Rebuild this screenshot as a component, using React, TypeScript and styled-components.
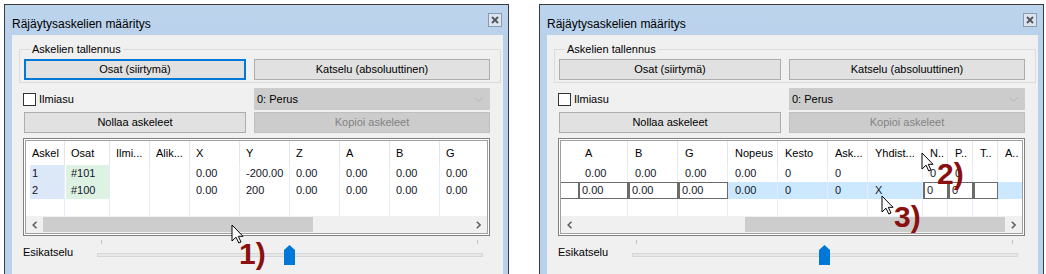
import React from "react";
import styled, { createGlobalStyle, css } from "styled-components";

type Tone = "blue" | "green";

interface Col {
  title: string;
  width: number;
  tone?: Tone;
  pad?: number;
}

interface Cell {
  text: string;
  boxed?: boolean;
}

interface Row {
  cells: Cell[];
  selected?: boolean;
  boxedLead?: boolean;
}

interface GridSpec {
  lead: number;
  pad: number;
  cols: Col[];
  rows: Row[];
  thumb: { offset: number; width: number };
}

interface Mark {
  label: string;
  x: number;
  y: number;
}

interface Pointer {
  x: number;
  y: number;
}

const txt = (...values: string[]): Cell[] => values.map((text) => ({ text }));

const leftGrid: GridSpec = {
  lead: 3,
  pad: 6,
  cols: [
    { title: "Askel", width: 36, tone: "blue", pad: 3 },
    { title: "Osat", width: 45, tone: "green" },
    { title: "Ilmi...", width: 40 },
    { title: "Alik...", width: 40 },
    { title: "X", width: 50 },
    { title: "Y", width: 50 },
    { title: "Z", width: 50 },
    { title: "A", width: 50 },
    { title: "B", width: 50 },
    { title: "G", width: 50 },
  ],
  rows: [
    { cells: txt("1", "#101", "", "", "0.00", "-200.00", "0.00", "0.00", "0.00", "0.00") },
    { cells: txt("2", "#100", "", "", "0.00", "200", "0.00", "0.00", "0.00", "0.00") },
  ],
  thumb: { offset: 0, width: 270 },
};

const rightGrid: GridSpec = {
  lead: 17,
  pad: 7,
  cols: [
    { title: "A", width: 50 },
    { title: "B", width: 50 },
    { title: "G", width: 50 },
    { title: "Nopeus", width: 50 },
    { title: "Kesto", width: 50 },
    { title: "Ask...", width: 40 },
    { title: "Yhdist...", width: 55 },
    { title: "N..", width: 25 },
    { title: "P..", width: 25 },
    { title: "T..", width: 25 },
    { title: "A..", width: 25 },
  ],
  rows: [
    { cells: txt("0.00", "0.00", "0.00", "0.00", "0", "0", "", "0", "0", "", "") },
    {
      selected: true,
      boxedLead: true,
      cells: [
        { text: "0.00", boxed: true },
        { text: "0.00", boxed: true },
        { text: "0.00", boxed: true },
        { text: "0.00" },
        { text: "0" },
        { text: "0" },
        { text: "X" },
        { text: "0", boxed: true },
        { text: "0", boxed: true },
        { text: "", boxed: true },
        { text: "" },
      ],
    },
  ],
  thumb: { offset: 167, width: 260 },
};

const GlobalStyle = createGlobalStyle`
  html, body {
    margin: 0;
    padding: 0;
    background: #fff;
    overflow: hidden;
  }
  body {
    font-family: "Liberation Sans", Arial, sans-serif;
    font-size: 11px;
    color: #000;
  }
  * {
    box-sizing: border-box;
  }
`;

function Chevron({ dir }: { dir: "left" | "right" }) {
  const pts = dir === "left" ? "4.5,0.8 1.2,4 4.5,7.2" : "0.8,0.8 4.1,4 0.8,7.2";
  return (
    <svg width="6" height="8" viewBox="0 0 6 8">
      <polyline points={pts} fill="none" stroke="#606060" strokeWidth="1.6" />
    </svg>
  );
}

function Cursor({ x, y }: Pointer) {
  return (
    <CursorIcon width="13" height="20" viewBox="0 0 13 20" style={{ left: x - 1, top: y - 1 }}>
      <path
        d="M1 1 V17 L5 13.2 L7.8 19 L10 18 L7.3 12.3 H12 Z"
        fill="#fff"
        stroke="#000"
        strokeWidth="1"
        strokeLinejoin="round"
      />
    </CursorIcon>
  );
}

function DataGrid({ spec }: { spec: GridSpec }) {
  return (
    <GridFrame>
      <GridInner>
        <GridRows>
          <HeaderRow>
            <LeadCell $w={spec.lead} />
            {spec.cols.map((c) => (
              <HeaderCell key={c.title} $w={c.width} $pad={c.pad ?? spec.pad}>
                {c.title}
              </HeaderCell>
            ))}
          </HeaderRow>
          {spec.rows.map((row, i) => (
            <DataRow key={i} $selected={row.selected}>
              <LeadCell $w={spec.lead} $boxed={row.boxedLead} />
              {spec.cols.map((c, j) => {
                const cell = row.cells[j];
                return (
                  <DataCell
                    key={c.title}
                    $w={c.width}
                    $pad={c.pad ?? spec.pad}
                    $tone={c.tone}
                    $boxed={cell.boxed}
                  >
                    {cell.text}
                  </DataCell>
                );
              })}
            </DataRow>
          ))}
          <FillerRow>
            <LeadCell $w={spec.lead} />
            {spec.cols.map((c) => (
              <DataCell key={c.title} $w={c.width} $pad={spec.pad} />
            ))}
          </FillerRow>
        </GridRows>
        <HScroll>
          <ScrollArrow>
            <Chevron dir="left" />
          </ScrollArrow>
          <ScrollTrack>
            <ScrollThumb $offset={spec.thumb.offset} $width={spec.thumb.width} />
          </ScrollTrack>
          <ScrollArrow>
            <Chevron dir="right" />
          </ScrollArrow>
        </HScroll>
      </GridInner>
    </GridFrame>
  );
}

function StepDialog({
  focused,
  grid,
  marks,
  pointers,
}: {
  focused?: boolean;
  grid: GridSpec;
  marks: Mark[];
  pointers: Pointer[];
}) {
  const preview = 0.5;
  return (
    <Window>
      <TitleBar>
        <Title>Räjäytysaskelien määritys</Title>
        <CloseButton>
          <svg width="8" height="8" viewBox="0 0 8 8">
            <path d="M1 1 L7 7 M7 1 L1 7" stroke="#4f5660" strokeWidth="1.8" />
          </svg>
        </CloseButton>
      </TitleBar>
      <Content>
        <Group>
          <GroupLegend>Askelien tallennus</GroupLegend>
          <TwoCols>
            <Button $focused={focused}>Osat (siirtymä)</Button>
            <Button>Katselu (absoluuttinen)</Button>
          </TwoCols>
        </Group>
        <OptionRow>
          <CheckLabel>
            <CheckBox />
            Ilmiasu
          </CheckLabel>
          <Combo>
            <span>0: Perus</span>
            <svg width="9" height="5" viewBox="0 0 9 5">
              <polyline points="0.5,0.5 4.5,4.3 8.5,0.5" fill="none" stroke="#b3b3b3" strokeWidth="1" />
            </svg>
          </Combo>
        </OptionRow>
        <ActionRow>
          <Button $narrow>Nollaa askeleet</Button>
          <Button disabled>Kopioi askeleet</Button>
        </ActionRow>
        <DataGrid spec={grid} />
        <Footer>
          <FooterLabel>Esikatselu</FooterLabel>
          <Slider>
            <Ticks>
              <Tick />
              <Tick />
            </Ticks>
            <Track />
            <SliderThumb
              width="11"
              height="20"
              viewBox="0 0 11 20"
              style={{ left: `calc(4px + (100% - 9px) * ${preview} - 5.5px)` }}
            >
              <path d="M0 5 L5.5 0 L11 5 V20 H0 Z" fill="#0078d7" />
            </SliderThumb>
          </Slider>
        </Footer>
      </Content>
      {pointers.map((p, i) => (
        <Cursor key={i} x={p.x} y={p.y} />
      ))}
      {marks.map((m) => (
        <Annotation key={m.label} style={{ left: m.x, top: m.y }}>
          {m.label}
        </Annotation>
      ))}
    </Window>
  );
}

export default function App() {
  return (
    <>
      <GlobalStyle />
      <Page>
        <StepDialog
          focused
          grid={leftGrid}
          pointers={[{ x: 227, y: 220 }]}
          marks={[{ label: "1)", x: 234, y: 234 }]}
        />
        <StepDialog
          grid={rightGrid}
          pointers={[
            { x: 382, y: 148 },
            { x: 342, y: 191 },
          ]}
          marks={[
            { label: "2)", x: 397, y: 154 },
            { label: "3)", x: 354, y: 197 },
          ]}
        />
      </Page>
    </>
  );
}

const Page = styled.div`
  display: flex;
  gap: 30px;
  padding: 4px 0 0 4px;
  height: 274px;
  overflow: hidden;
`;

const Window = styled.section`
  position: relative;
  flex: 0 0 auto;
  width: 505px;
  height: 300px;
  border: 1px solid #3a3a3a;
  background: linear-gradient(180deg, #bcd4ec 0px, #b9d1ea 30px, #b9d1ea 100%);
  padding: 0 5px 0 7px;
  display: flex;
  flex-direction: column;
`;

const TitleBar = styled.header`
  height: 30px;
  flex: none;
  display: flex;
  justify-content: space-between;
  align-items: flex-start;
`;

const Title = styled.h1`
  margin: 12px 0 0;
  font: 400 12px/14px "Liberation Sans", Arial, sans-serif;
  color: #000;
`;

const CloseButton = styled.div`
  margin: 8px 1px 0 0;
  width: 14px;
  height: 14px;
  border: 1px solid #8a9ab0;
  background: #dde4ee;
  display: grid;
  place-items: center;
`;

const Content = styled.main`
  flex: 1;
  background: #f0f0f0;
  padding: 0 13px 0 11px;
  display: flex;
  flex-direction: column;
`;

const Group = styled.fieldset`
  margin: 7px -11px 0 -4px;
  padding: 3px 10px 2px 4px;
  border: 1px solid #dcdcdc;
  min-width: 0;
`;

const GroupLegend = styled.legend`
  margin-left: 6px;
  padding: 0 2px;
  line-height: 14px;
  font-size: 11px;
`;

const TwoCols = styled.div`
  display: grid;
  grid-template-columns: 222px 1fr;
  column-gap: 8px;
`;

const OptionRow = styled.div`
  margin-top: 5px;
  height: 22px;
  display: grid;
  grid-template-columns: 231px 1fr;
`;

const ActionRow = styled.div`
  margin-top: 2px;
  display: grid;
  grid-template-columns: 231px 1fr;
`;

const Button = styled.button<{ $focused?: boolean; $narrow?: boolean }>`
  height: 21px;
  margin: 0;
  padding: 0;
  font: 400 11px/1 "Liberation Sans", Arial, sans-serif;
  color: #000;
  background: #e1e1e1;
  border: 1px solid #adadad;
  ${(p) =>
    p.$narrow &&
    css`
      margin-left: 1px;
      width: 222px;
    `}
  ${(p) =>
    p.$focused &&
    css`
      border: 2px solid #0078d7;
    `}
  &:disabled {
    background: #cccccc;
    border-color: #bfbfbf;
    color: #838383;
  }
`;

const CheckLabel = styled.label`
  display: flex;
  align-items: center;
  gap: 3px;
  line-height: 14px;
`;

const CheckBox = styled.span`
  width: 13px;
  height: 13px;
  background: #fff;
  border: 1px solid #333;
`;

const Combo = styled.div`
  display: flex;
  align-items: center;
  justify-content: space-between;
  padding: 0 6px 0 2px;
  background: #cccccc;
  border: 1px solid #cccccc;
`;

const GridFrame = styled.div`
  margin-top: 5px;
  height: 98px;
  border: 1px solid #808080;
  padding: 1px;
  background: #fff;
`;

const GridInner = styled.div`
  height: 100%;
  border: 1px solid #a0a0a0;
  display: flex;
  flex-direction: column;
  overflow: hidden;
`;

const GridRows = styled.div`
  flex: 1;
  display: flex;
  flex-direction: column;
  overflow: hidden;
`;

const HeaderRow = styled.div`
  display: flex;
  height: 24px;
  flex: none;
`;

const DataRow = styled.div<{ $selected?: boolean }>`
  display: flex;
  height: 17px;
  flex: none;
  background: ${(p) => (p.$selected ? "#cce8ff" : "transparent")};
  color: #141428;
`;

const FillerRow = styled.div`
  display: flex;
  flex: 1;
`;

const LeadCell = styled.div<{ $w: number; $boxed?: boolean }>`
  flex: 0 0 ${(p) => p.$w}px;
  ${(p) =>
    p.$boxed &&
    css`
      background: #fff;
      border-top: 1px solid #6b6b6b;
      border-bottom: 1px solid #6b6b6b;
    `}
`;

const HeaderCell = styled.div<{ $w: number; $pad: number }>`
  flex: 0 0 ${(p) => p.$w}px;
  padding-left: ${(p) => p.$pad}px;
  border-right: 1px solid #e5e5e5;
  line-height: 24px;
  white-space: nowrap;
  overflow: hidden;
`;

const toneColor: Record<Tone, string> = {
  blue: "#dce7f8",
  green: "#def2e4",
};

const DataCell = styled.div<{ $w: number; $pad: number; $tone?: Tone; $boxed?: boolean }>`
  flex: 0 0 ${(p) => p.$w}px;
  padding-left: ${(p) => p.$pad}px;
  border-right: 1px solid #e4edf9;
  line-height: 17px;
  white-space: nowrap;
  overflow: hidden;
  ${(p) =>
    p.$tone &&
    css`
      background: ${toneColor[p.$tone]};
      box-shadow: inset 1px 0 0 #fff;
    `}
  ${(p) =>
    p.$boxed &&
    css`
      background: #fff;
      border: 1px solid #6b6b6b;
      border-left-width: 2px;
      padding-left: 2px;
      line-height: 15px;
    `}
`;

const HScroll = styled.div`
  height: 17px;
  flex: none;
  display: flex;
  background: #f0f0f0;
`;

const ScrollArrow = styled.div`
  width: 17px;
  display: grid;
  place-items: center;
`;

const ScrollTrack = styled.div`
  flex: 1;
  display: flex;
  align-items: center;
  overflow: hidden;
`;

const ScrollThumb = styled.div<{ $offset: number; $width: number }>`
  margin-left: ${(p) => p.$offset}px;
  width: ${(p) => p.$width}px;
  height: 15px;
  flex: none;
  background: #cdcdcd;
`;

const Footer = styled.div`
  display: flex;
  margin-top: 4px;
  height: 30px;
`;

const FooterLabel = styled.span`
  width: 74px;
  flex: none;
  margin-top: 5px;
  line-height: 14px;
`;

const Slider = styled.div`
  position: relative;
  flex: 1;
  margin-right: 7px;
`;

const Ticks = styled.div`
  display: flex;
  justify-content: space-between;
  padding: 0 5px 0 4px;
  height: 4px;
`;

const Tick = styled.span`
  width: 1px;
  height: 4px;
  background: #c4c4c4;
`;

const Track = styled.div`
  margin-top: 9px;
  height: 4px;
  background: #e7e7e7;
  border: 1px solid #d6d6d6;
`;

const SliderThumb = styled.svg`
  position: absolute;
  top: 5px;
`;

const CursorIcon = styled.svg`
  position: absolute;
  pointer-events: none;
`;

const Annotation = styled.span`
  position: absolute;
  font: 700 30px/30px "Liberation Sans", Arial, sans-serif;
  color: #8a1010;
  white-space: nowrap;
`;
